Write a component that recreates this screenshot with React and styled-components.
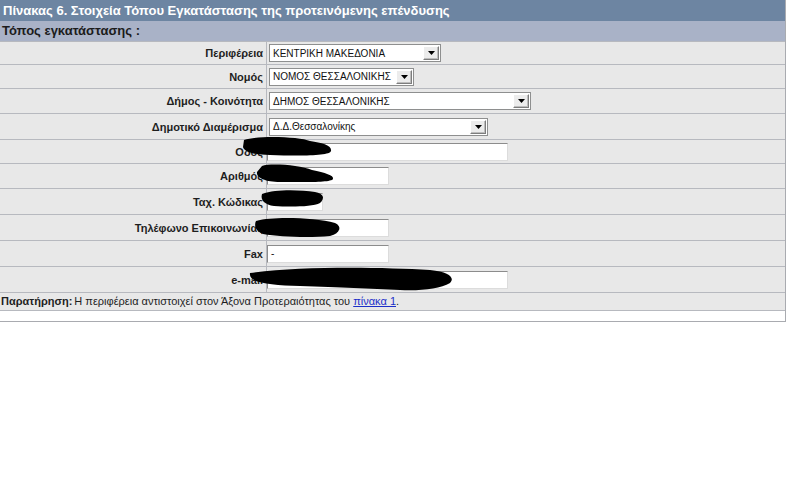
import React from 'react';
import styled, { createGlobalStyle } from 'styled-components';

const GlobalStyle = createGlobalStyle`
  body {
    margin: 0;
    background: #ffffff;
    font-family: Tahoma, "Liberation Sans", Arial, sans-serif;
  }
`;

const rows = [
  { label: 'Περιφέρεια', kind: 'select', value: 'ΚΕΝΤΡΙΚΗ ΜΑΚΕΔΟΝΙΑ', w: 172, h: 23 },
  { label: 'Νομός', kind: 'select', value: 'ΝΟΜΟΣ ΘΕΣΣΑΛΟΝΙΚΗΣ', w: 145, h: 24 },
  { label: 'Δήμος - Κοινότητα', kind: 'select', value: 'ΔΗΜΟΣ ΘΕΣΣΑΛΟΝΙΚΗΣ', w: 262, h: 25 },
  { label: 'Δημοτικό Διαμέρισμα', kind: 'select', value: 'Δ.Δ.Θεσσαλονίκης', w: 219, h: 26 },
  { label: 'Οδός', kind: 'input', value: '', w: 241, h: 24 },
  { label: 'Αριθμός', kind: 'input', value: '', w: 122, h: 25 },
  { label: 'Ταχ. Κώδικας', kind: 'input', value: '', w: 56, h: 26 },
  { label: 'Τηλέφωνο Επικοινωνίας', kind: 'input', value: '', w: 122, h: 26 },
  { label: 'Fax', kind: 'input', value: '-', w: 122, h: 26 },
  { label: 'e-mail', kind: 'input', value: '', w: 241, h: 26 },
];

const Page = styled.div`
  position: relative;
  width: 786px;
`;

const Panel = styled.div`
  width: 785px;
  border-right: 1px solid #a9abb0;
  border-bottom: 1px solid #a9abb0;
`;

const Title = styled.div`
  height: 21px;
  padding-left: 3px;
  background: #6d85a2;
  color: #ffffff;
  font-size: 13px;
  font-weight: bold;
  line-height: 21px;
  white-space: nowrap;
`;

const Section = styled.div`
  height: 20px;
  padding-left: 2px;
  background: #a9b2c7;
  color: #1c1c1c;
  font-size: 13px;
  font-weight: bold;
  line-height: 20px;
`;

const Row = styled.div`
  display: grid;
  grid-template-columns: 267px 1fr;
  box-sizing: border-box;
  height: ${(p) => p.h}px;
  background: #e8e8e8;
  border-top: 1px solid #b7b9bf;
`;

const Label = styled.div`
  display: flex;
  align-items: center;
  justify-content: flex-end;
  padding-right: 3px;
  border-right: 1px solid #b7b9bf;
  color: #1e1e1e;
  font-size: 11px;
  font-weight: bold;
  white-space: nowrap;
  overflow: hidden;
`;

const Field = styled.div`
  display: flex;
  align-items: center;
  padding-left: ${(p) => (p.kind === 'select' ? 2 : 0)}px;
`;

const Select = styled.div`
  display: flex;
  align-items: center;
  box-sizing: border-box;
  width: ${(p) => p.w}px;
  height: 18px;
  background: #ffffff;
  border: 1px solid #8e8f8f;
  font-size: 10px;
  color: #111111;
`;

const SelectText = styled.span`
  flex: 1;
  padding-left: 3px;
  white-space: nowrap;
  overflow: hidden;
`;

const Arrow = styled.span`
  display: flex;
  align-items: center;
  justify-content: center;
  box-sizing: border-box;
  width: 16px;
  height: 14px;
  margin-right: 1px;
  background: #ececec;
  border: 1px solid;
  border-color: #ffffff #7d7d7d #7d7d7d #ffffff;
  box-shadow: inset -1px -1px 0 #bdbdbd;
`;

const Input = styled.div`
  box-sizing: border-box;
  width: ${(p) => p.w}px;
  height: 18px;
  padding-left: 3px;
  background: #ffffff;
  border: 1px solid;
  border-color: #8c8c8c #dcdcdc #dcdcdc #8c8c8c;
  font-size: 10px;
  line-height: 15px;
  color: #111111;
`;

const Note = styled.div`
  box-sizing: border-box;
  height: 19px;
  padding-left: 1px;
  background: #e8e8e8;
  border-top: 1px solid #b7b9bf;
  border-bottom: 1px solid #b7b9bf;
  font-size: 11px;
  line-height: 17px;
  color: #1e1e1e;
  white-space: nowrap;
`;

const Strong = styled.b`
  margin-right: 2px;
`;

const Link = styled.a`
  color: #1c2fc8;
  text-decoration: underline;
`;

const Blank = styled.div`
  height: 10px;
  background: #ffffff;
`;

// redaction marks drawn over the form
const Scribbles = styled.svg`
  position: absolute;
  left: 0;
  top: 0;
  pointer-events: none;
`;

function Control({ row }) {
  if (row.kind === 'select') {
    return (
      <Select w={row.w}>
        <SelectText>{row.value}</SelectText>
        <Arrow>
          <svg width="7" height="4" viewBox="0 0 7 4">
            <path d="M0 0h7L3.5 4z" fill="#000" />
          </svg>
        </Arrow>
      </Select>
    );
  }
  return <Input w={row.w}>{row.value}</Input>;
}

export default function App() {
  return (
    <Page>
      <GlobalStyle />
      <Panel>
        <Title>Πίνακας 6. Στοιχεία Τόπου Εγκατάστασης της προτεινόμενης επένδυσης</Title>
        <Section>Τόπος εγκατάστασης :</Section>
        {rows.map((row) => (
          <Row key={row.label} h={row.h}>
            <Label>{row.label}</Label>
            <Field kind={row.kind}>
              <Control row={row} />
            </Field>
          </Row>
        ))}
        <Note>
          <Strong>Παρατήρηση:</Strong>Η περιφέρεια αντιστοιχεί στον Άξονα Προτεραιότητας του{' '}
          <Link href="#">πίνακα 1</Link>.
        </Note>
        <Blank />
      </Panel>
      <Scribbles width="786" height="330" viewBox="0 0 786 330">
        <path d="M244 140 C260 135 300 137 310 141 C322 143 332 145 331 151 C330 156 300 156 270 155 C255 155 244 152 243 147 Z" fill="#000" />
        <path d="M262 166 C270 163 300 165 312 170 C325 173 334 175 333 179 C331 183 300 182 280 182 C266 182 256 178 257 172 Z" fill="#000" />
        <path d="M262 194 C276 189 300 190 315 192 C324 194 325 198 320 203 C312 207 290 207 274 206 C265 205 260 200 262 194 Z" fill="#000" />
        <path d="M256 221 C275 216 315 218 335 223 C342 226 341 233 330 236 C310 238 280 237 263 234 C255 231 254 225 256 221 Z" fill="#000" />
        <path d="M250 273 C300 266 380 267 430 270 C450 272 455 278 450 283 C440 289 420 291 400 290 C370 289 340 287 300 286 C270 285 248 283 250 273 Z" fill="#000" />
      </Scribbles>
    </Page>
  );
}
